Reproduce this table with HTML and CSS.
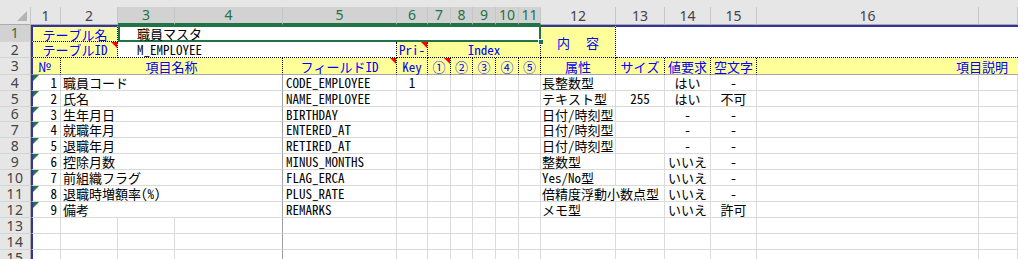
FILE: index.html
```html
<!DOCTYPE html>
<html lang="ja">
<head>
<meta charset="utf-8">
<title>職員マスタ</title>
<link rel="stylesheet" href="styles.css">
</head>
<body>
<div class="sheet">
  <div class="strip"></div>

  <div class="corner"><span class="selall"></span></div>
  <div class="ch">1</div>
  <div class="ch">2</div>
  <div class="ch sel">3</div>
  <div class="ch sel">4</div>
  <div class="ch sel">5</div>
  <div class="ch sel">6</div>
  <div class="ch sel">7</div>
  <div class="ch sel">8</div>
  <div class="ch sel">9</div>
  <div class="ch sel">10</div>
  <div class="ch sel">11</div>
  <div class="ch">12</div>
  <div class="ch">13</div>
  <div class="ch">14</div>
  <div class="ch">15</div>
  <div class="ch">16</div>
  <div class="ch"></div>

  <!-- row 1 -->
  <div class="rh sel">1</div>
  <div class="y s2 bl topb ctr">テーブル名</div>
  <div class="selbox s9 ind">職員マスタ<span class="handle"></span></div>
  <div class="y r2 topb ctr naiyou">内　容</div>
  <div class="w s5 r2 topb"></div>

  <!-- row 2 -->
  <div class="rh">2</div>
  <div class="y s2 bl ctr com">テーブルID</div>
  <div class="w s3 ind dotr">M_EMPLOYEE</div>
  <div class="y ctr com">Pri-</div>
  <div class="y s5 ctr">Index</div>

  <!-- row 3 -->
  <div class="rh">3</div>
  <div class="y h bl no">№</div>
  <div class="y h s3 ctr">項目名称</div>
  <div class="y h ctr com">フィールドID</div>
  <div class="y h ctr">Key</div>
  <div class="y h ctr com">①</div>
  <div class="y h ctr">②</div>
  <div class="y h ctr">③</div>
  <div class="y h ctr">④</div>
  <div class="y h ctr">⑤</div>
  <div class="y h ctr">属性</div>
  <div class="y h ctr">サイズ</div>
  <div class="y h ctr">値要求</div>
  <div class="y h ctr">空文字</div>
  <div class="y h s2 rt last">項目説明</div>

  <!-- row 4 -->
  <div class="rh">4</div>
  <div class="c bl rt num gt">1</div>
  <div class="c s3 dk nm">職員コード</div>
  <div class="c fd">CODE_EMPLOYEE</div>
  <div class="c ctr">1</div>
  <div class="c"></div><div class="c"></div><div class="c"></div><div class="c"></div><div class="c"></div>
  <div class="c at">長整数型</div>
  <div class="c ctr"></div>
  <div class="c ctr">はい</div>
  <div class="c ctr">-</div>
  <div class="c"></div>
  <div class="c"></div>

  <!-- row 5 -->
  <div class="rh">5</div>
  <div class="c bl rt num gt">2</div>
  <div class="c s3 dk nm">氏名</div>
  <div class="c fd">NAME_EMPLOYEE</div>
  <div class="c ctr"></div>
  <div class="c"></div><div class="c"></div><div class="c"></div><div class="c"></div><div class="c"></div>
  <div class="c at">テキスト型</div>
  <div class="c ctr">255</div>
  <div class="c ctr">はい</div>
  <div class="c ctr">不可</div>
  <div class="c"></div>
  <div class="c"></div>

  <!-- row 6 -->
  <div class="rh">6</div>
  <div class="c bl rt num gt">3</div>
  <div class="c s3 dk nm">生年月日</div>
  <div class="c fd">BIRTHDAY</div>
  <div class="c ctr"></div>
  <div class="c"></div><div class="c"></div><div class="c"></div><div class="c"></div><div class="c"></div>
  <div class="c at">日付/時刻型</div>
  <div class="c ctr"></div>
  <div class="c ctr">-</div>
  <div class="c ctr">-</div>
  <div class="c"></div>
  <div class="c"></div>

  <!-- row 7 -->
  <div class="rh">7</div>
  <div class="c bl rt num gt">4</div>
  <div class="c s3 dk nm">就職年月</div>
  <div class="c fd">ENTERED_AT</div>
  <div class="c ctr"></div>
  <div class="c"></div><div class="c"></div><div class="c"></div><div class="c"></div><div class="c"></div>
  <div class="c at">日付/時刻型</div>
  <div class="c ctr"></div>
  <div class="c ctr">-</div>
  <div class="c ctr">-</div>
  <div class="c"></div>
  <div class="c"></div>

  <!-- row 8 -->
  <div class="rh">8</div>
  <div class="c bl rt num gt">5</div>
  <div class="c s3 dk nm">退職年月</div>
  <div class="c fd">RETIRED_AT</div>
  <div class="c ctr"></div>
  <div class="c"></div><div class="c"></div><div class="c"></div><div class="c"></div><div class="c"></div>
  <div class="c at">日付/時刻型</div>
  <div class="c ctr"></div>
  <div class="c ctr">-</div>
  <div class="c ctr">-</div>
  <div class="c"></div>
  <div class="c"></div>

  <!-- row 9 -->
  <div class="rh">9</div>
  <div class="c bl rt num gt">6</div>
  <div class="c s3 dk nm">控除月数</div>
  <div class="c fd">MINUS_MONTHS</div>
  <div class="c ctr"></div>
  <div class="c"></div><div class="c"></div><div class="c"></div><div class="c"></div><div class="c"></div>
  <div class="c at">整数型</div>
  <div class="c ctr"></div>
  <div class="c ctr">いいえ</div>
  <div class="c ctr">-</div>
  <div class="c"></div>
  <div class="c"></div>

  <!-- row 10 -->
  <div class="rh">10</div>
  <div class="c bl rt num gt">7</div>
  <div class="c s3 dk nm">前組織フラグ</div>
  <div class="c fd">FLAG_ERCA</div>
  <div class="c ctr"></div>
  <div class="c"></div><div class="c"></div><div class="c"></div><div class="c"></div><div class="c"></div>
  <div class="c at">Yes/No型</div>
  <div class="c ctr"></div>
  <div class="c ctr">いいえ</div>
  <div class="c ctr">-</div>
  <div class="c"></div>
  <div class="c"></div>

  <!-- row 11 -->
  <div class="rh">11</div>
  <div class="c bl rt num gt">8</div>
  <div class="c s3 dk nm">退職時増額率(%)</div>
  <div class="c fd">PLUS_RATE</div>
  <div class="c ctr"></div>
  <div class="c"></div><div class="c"></div><div class="c"></div><div class="c"></div><div class="c"></div>
  <div class="c s2 at">倍精度浮動小数点型</div>
  <div class="c ctr">いいえ</div>
  <div class="c ctr">-</div>
  <div class="c"></div>
  <div class="c"></div>

  <!-- row 12 -->
  <div class="rh">12</div>
  <div class="c bl rt num gt">9</div>
  <div class="c s3 dk nm">備考</div>
  <div class="c fd">REMARKS</div>
  <div class="c ctr"></div>
  <div class="c"></div><div class="c"></div><div class="c"></div><div class="c"></div><div class="c"></div>
  <div class="c at">メモ型</div>
  <div class="c ctr"></div>
  <div class="c ctr">いいえ</div>
  <div class="c ctr">許可</div>
  <div class="c"></div>
  <div class="c"></div>

  <!-- row 13 -->
  <div class="rh">13</div>
  <div class="c bl"></div><div class="c"></div><div class="c"></div><div class="c dk"></div>
  <div class="c"></div><div class="c"></div><div class="c"></div><div class="c"></div><div class="c"></div>
  <div class="c"></div><div class="c"></div><div class="c"></div><div class="c"></div><div class="c"></div>
  <div class="c"></div><div class="c"></div><div class="c"></div>

  <!-- row 14 -->
  <div class="rh">14</div>
  <div class="c bl"></div><div class="c"></div><div class="c"></div><div class="c dk"></div>
  <div class="c"></div><div class="c"></div><div class="c"></div><div class="c"></div><div class="c"></div>
  <div class="c"></div><div class="c"></div><div class="c"></div><div class="c"></div><div class="c"></div>
  <div class="c"></div><div class="c"></div><div class="c"></div>

  <!-- row 15 -->
  <div class="rh">15</div>
  <div class="c bl"></div><div class="c"></div><div class="c"></div><div class="c dk"></div>
  <div class="c"></div><div class="c"></div><div class="c"></div><div class="c"></div><div class="c"></div>
  <div class="c"></div><div class="c"></div><div class="c"></div><div class="c"></div><div class="c"></div>
  <div class="c"></div><div class="c"></div><div class="c"></div>
</div>
</body>
</html>
```

FILE: styles.css
```css
* {
  box-sizing: border-box;
  margin: 0;
  padding: 0;
}

html, body {
  width: 1018px;
  height: 259px;
  overflow: hidden;
  background: #ffffff;
}

body {
  font-family: "Noto Sans Mono CJK JP", "Noto Sans CJK JP", monospace;
  font-size: 13px;
  color: #000000;
}

.sheet {
  display: grid;
  grid-template-columns: 31px 30px 57px 57px 108px 114px 31px 23px 22px 23px 23px 22px 75px 49px 46px 46px 222px 39px;
  grid-template-rows: 7px 18px 17px 16px 17px 16px 16px 15px 16px 16px 16px 16px 16px 16px 16px 16px 16px;
}

.strip {
  grid-column: 1 / -1;
  background: #e6e6e6;
}

/* headers */
.corner {
  background: #e6e6e6;
  border-right: 1px solid #c6c6c6;
  border-bottom: 1px solid #ababab;
  display: flex;
  justify-content: flex-end;
  align-items: flex-end;
  padding: 0 3px 3px 0;
}

.selall {
  width: 0;
  height: 0;
  border-left: 10px solid transparent;
  border-bottom: 10px solid #b4b4b4;
}

.ch,
.rh {
  background: #e6e6e6;
  font-family: "Noto Sans", "Liberation Sans", sans-serif;
  font-size: 14px;
  color: #444444;
  display: flex;
  align-items: center;
  justify-content: center;
  line-height: 1;
}

.ch {
  border-right: 1px solid #c6c6c6;
  border-bottom: 1px solid #ababab;
}

.ch.sel {
  background: #d2d2d2;
  color: #217346;
  border-bottom: 2px solid #217346;
}

.rh {
  letter-spacing: 0.5px;
  border-right: 1px solid #ababab;
  border-bottom: 1px solid #d4d4d4;
}

.rh.sel {
  background: #d2d2d2;
  color: #217346;
}

/* generic cells */
.c,
.y,
.w,
.selbox {
  display: flex;
  align-items: center;
  white-space: nowrap;
  line-height: 1;
  position: relative;
}

.c {
  border-right: 1px solid #dadada;
  border-bottom: 1px solid #dadada;
}

.y {
  background: #ffff99;
  color: #0000ff;
  border-right: 1px dotted #000000;
  border-bottom: 1px dotted #000000;
}

.y.h {
  border-bottom: 1px solid #a6a6a6;
}

.y.last {
  border-right: none;
  padding-right: 10px;
}

.w {
  background: #ffffff;
  border-bottom: 1px dotted #000000;
}

.dotr {
  border-right: 1px dotted #000000;
}

.selbox {
  background: #ffffff;
  box-shadow: inset 0 0 0 2px #217346;
}

.handle {
  position: absolute;
  right: -3px;
  bottom: -3px;
  width: 6px;
  height: 6px;
  background: #217346;
  border: 1px solid #ffffff;
  z-index: 2;
}

/* spans */
.s2 { grid-column: span 2; }
.s3 { grid-column: span 3; }
.s5 { grid-column: span 5; }
.s9 { grid-column: span 9; }
.r2 { grid-row: span 2; }

/* borders */
.bl {
  border-left: 2px solid #34349e;
}

.topb {
  border-top: 2px solid #34349e;
}

.dk {
  border-right: 1px solid #a0a0a0;
}

/* alignment */
.ctr { justify-content: center; }
.rt { justify-content: flex-end; }

.ind { padding-left: 19px; }
.no { padding-left: 5px; }
.num { padding-right: 3px; }
.nm { padding-left: 2px; }
.fd { padding-left: 3px; }
.at { padding-left: 1px; }

.naiyou {
  letter-spacing: 1.5px;
  padding-left: 1.5px;
}

/* comment indicators (red) and error indicators (green) */
.com::after {
  content: "";
  position: absolute;
  top: 0;
  right: 0;
  border-top: 6px solid #ff0000;
  border-left: 6px solid transparent;
}

.gt::before {
  content: "";
  position: absolute;
  top: 0;
  left: 0;
  border-top: 6px solid #1b7d2f;
  border-right: 6px solid transparent;
}
```
